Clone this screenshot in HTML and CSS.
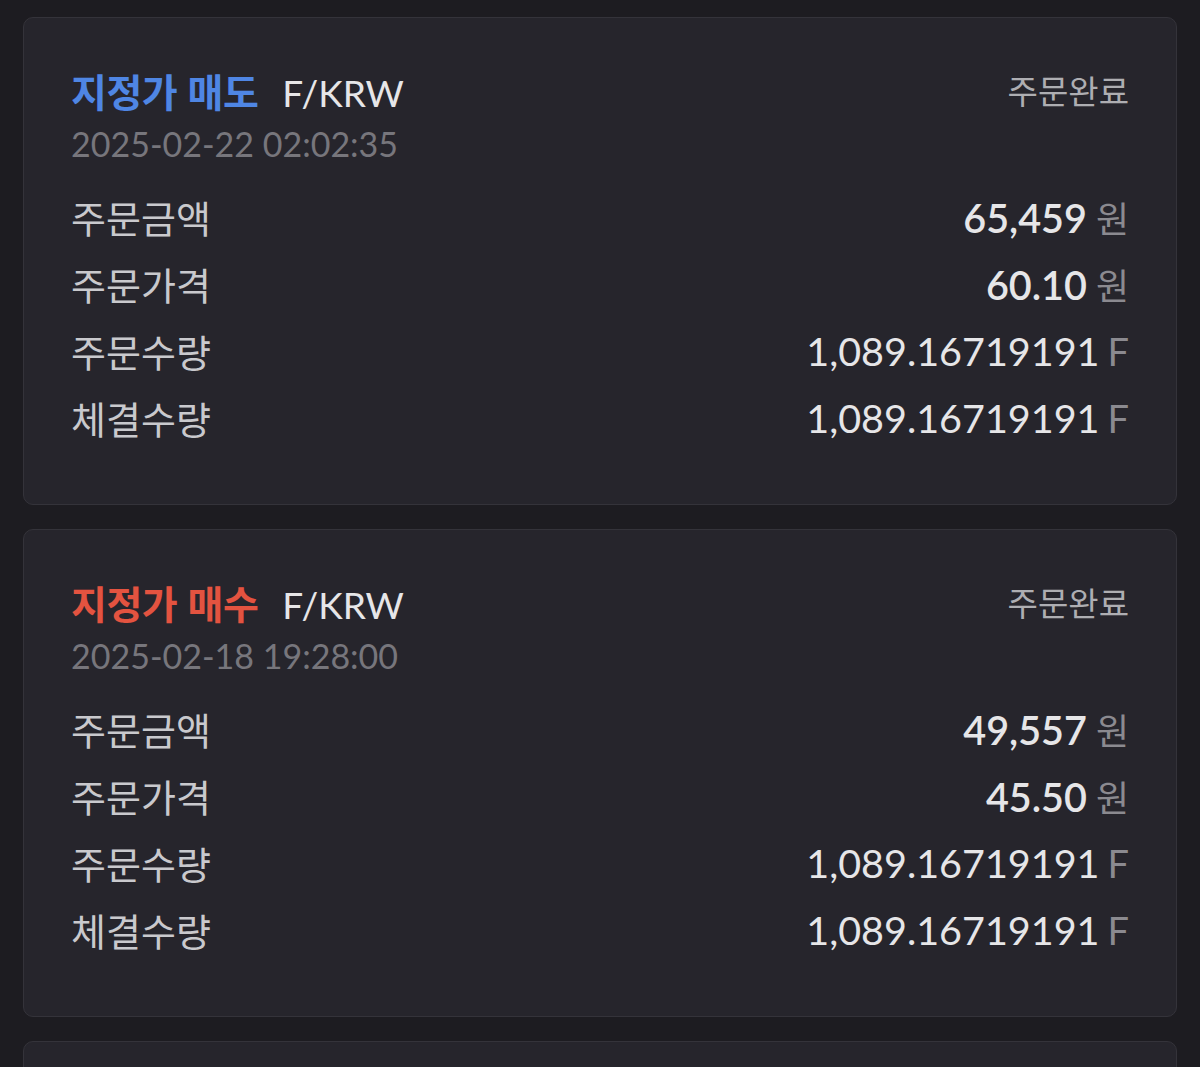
FILE: index.html
```html
<!DOCTYPE html>
<html lang="ko">
<head>
<meta charset="utf-8">
<link rel="stylesheet" href="styles.css">
</head>
<body>
<div class="list">
  <section class="card">
    <div class="head">
      <div class="title"><span class="side sell">지정가 매도</span><span class="pair">F/KRW</span></div>
      <div class="status">주문완료</div>
    </div>
    <div class="date">2025-02-22 02:02:35</div>
    <div class="rows">
      <div class="row"><span class="label">주문금액</span><span class="val"><b>65,459</b><i class="unit">원</i></span></div>
      <div class="row"><span class="label">주문가격</span><span class="val"><b>60.10</b><i class="unit">원</i></span></div>
      <div class="row"><span class="label">주문수량</span><span class="val">1,089.16719191<i class="unit f">F</i></span></div>
      <div class="row"><span class="label">체결수량</span><span class="val">1,089.16719191<i class="unit f">F</i></span></div>
    </div>
  </section>
  <section class="card">
    <div class="head">
      <div class="title"><span class="side buy">지정가 매수</span><span class="pair">F/KRW</span></div>
      <div class="status">주문완료</div>
    </div>
    <div class="date">2025-02-18 19:28:00</div>
    <div class="rows">
      <div class="row"><span class="label">주문금액</span><span class="val"><b>49,557</b><i class="unit">원</i></span></div>
      <div class="row"><span class="label">주문가격</span><span class="val"><b>45.50</b><i class="unit">원</i></span></div>
      <div class="row"><span class="label">주문수량</span><span class="val">1,089.16719191<i class="unit f">F</i></span></div>
      <div class="row"><span class="label">체결수량</span><span class="val">1,089.16719191<i class="unit f">F</i></span></div>
    </div>
  </section>
  <section class="card"></section>
</div>
</body>
</html>
```
FILE: styles.css
```css
html, body {
  margin: 0;
  padding: 0;
  background: #1d1c21;
  height: 1067px;
  overflow: hidden;
}
body {
  font-family: Lato, "Noto Sans CJK KR", sans-serif;
  color: #e4e4e6;
}
.list {
  padding: 17px 23px 0 23px;
  display: flex;
  flex-direction: column;
  gap: 24px;
}
.card {
  background: #26252c;
  border: 1px solid #34333a;
  border-radius: 10px;
  padding: 43px 47px 53px 47px;
  min-height: 200px;
}
.head {
  display: flex;
  justify-content: space-between;
  align-items: center;
  height: 58px;
}
.title {
  display: flex;
  align-items: baseline;
  gap: 24px;
}
.side {
  font-family: "Noto Sans CJK KR", sans-serif;
  font-weight: 700;
  font-size: 39px;
  letter-spacing: -0.5px;
}
.sell { color: #4f86e4; }
.buy { color: #e35340; }
.pair {
  font-family: Lato, sans-serif;
  font-size: 37px;
  color: #e6e6e8;
}
.status {
  font-family: "Noto Sans CJK KR", sans-serif;
  font-size: 33px;
  color: #aeaeb2;
}
.date {
  font-family: Lato, sans-serif;
  font-size: 34px;
  color: #77767c;
  height: 46px;
  line-height: 46px;
  margin-top: 2px;
}
.rows {
  margin-top: 16px;
}
.row {
  display: flex;
  justify-content: space-between;
  align-items: center;
  height: 67px;
}
.label {
  font-family: "Noto Sans CJK KR", sans-serif;
  font-size: 38px;
  color: #c9c9cd;
}
.val {
  font-family: Lato, sans-serif;
  font-size: 39.5px;
  color: #e6e6e8;
  display: flex;
  align-items: baseline;
}
.val b {
  font-weight: 600;
}
.unit {
  font-style: normal;
  font-family: "Noto Sans CJK KR", sans-serif;
  font-size: 36px;
  color: #8b8a90;
  margin-left: 9px;
}
.unit.f {
  font-family: Lato, sans-serif;
  font-size: 38px;
  margin-left: 8px;
}
```
